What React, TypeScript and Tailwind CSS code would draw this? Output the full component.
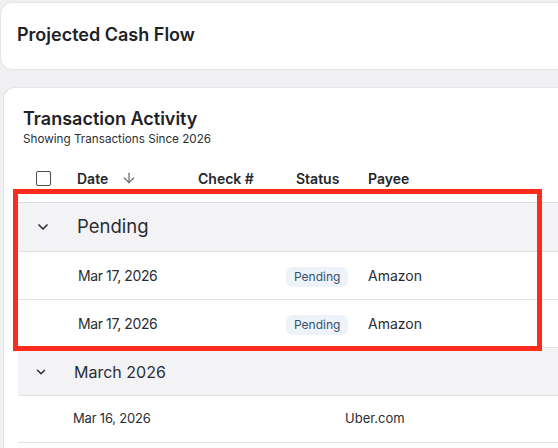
import { ArrowDown, ChevronDown } from "lucide-react";

type Txn = {
  date: string;
  status?: string;
  payee: string;
};

const pending: Txn[] = [
  { date: "Mar 17, 2026", status: "Pending", payee: "Amazon" },
  { date: "Mar 17, 2026", status: "Pending", payee: "Amazon" },
];

const march: Txn[] = [{ date: "Mar 16, 2026", payee: "Uber.com" }];

export default function App() {
  return (
    <div
      className="relative w-[558px] h-[448px] overflow-hidden bg-[#f0f0f2] text-[#22262a]"
      style={{ fontFamily: "Inter, 'Noto Sans', sans-serif" }}
    >
      {/* top card */}
      <div className="mt-[2px] w-[600px] h-[68px] rounded-xl bg-white border border-[#e4e4e8] flex items-center pl-4 pb-[3px]">
        <h2 className="text-[18px] font-semibold text-[#1e2226]">Projected Cash Flow</h2>
      </div>

      {/* transaction card */}
      <div className="mt-[17px] ml-[3px] w-[600px] h-[400px] rounded-tl-xl bg-white border-l border-t border-[#e4e4e8]">
        <div className="pl-[19px] pt-[19px]">
          <h3 className="text-[18px] leading-6 font-semibold text-[#1e2226]">Transaction Activity</h3>
          <p className="text-[11.7px] leading-4 text-[#2c3035]">Showing Transactions Since 2026</p>
        </div>

        <div className="ml-[14px] mt-[7px]">
          {/* header */}
          <div className="grid grid-cols-[59px_121px_98px_72px_1fr] h-[48px] items-center text-[14px] font-semibold text-[#23272b]">
            <div className="pl-[18px]">
              <div className="w-[15px] h-[15px] rounded-[2px] border-[1.5px] border-[#4a4e54]" />
            </div>
            <div className="flex items-center gap-[13px]">
              Date
              <ArrowDown size={16} strokeWidth={1.75} className="text-[#62666d]" />
            </div>
            <div>Check #</div>
            <div>Status</div>
            <div>Payee</div>
          </div>

          {/* pending group */}
          <div className="h-[49px] flex items-center bg-[#f3f3f6] border-t border-[#d9d9de]">
            <ChevronDown size={16} strokeWidth={2.5} className="ml-[17px] text-[#2a2d31]" />
            <span className="ml-[26px] text-[18.5px] text-[#2a2d31]">Pending</span>
          </div>
          {pending.map((t, i) => (
            <div
              key={i}
              className="grid grid-cols-[60px_208px_82px_1fr] h-[48px] items-center border-t border-[#e3e3e7] text-[14px] text-[#2a2d31]"
            >
              <div />
              <div className="tracking-[-0.4px]">{t.date}</div>
              <div>
                <span className="inline-flex items-center h-[20px] px-[8px] rounded-md bg-[#eef3f9] text-[12px] text-[#34506e]">
                  {t.status}
                </span>
              </div>
              <div>{t.payee}</div>
            </div>
          ))}

          {/* march group */}
          <div className="h-[48px] flex items-center bg-[#f3f3f6] border-t border-[#e3e3e7]">
            <ChevronDown size={14} strokeWidth={2.5} className="ml-[16px] text-[#2a2d31]" />
            <span className="ml-[26px] text-[16px] text-[#2a2d31]">March 2026</span>
          </div>
          {march.map((t, i) => (
            <div
              key={i}
              className="grid grid-cols-[55px_272px_1fr] h-[48px] items-center border-t border-b border-[#e3e3e7] text-[13px] text-[#2a2d31]"
            >
              <div />
              <div className="tracking-[-0.2px]">{t.date}</div>
              <div>{t.payee}</div>
            </div>
          ))}
        </div>
      </div>

      {/* highlight box */}
      <div className="absolute left-[13px] top-[189px] w-[529px] h-[162px] border-[5px] border-[#ff2b1c]" />
    </div>
  );
}
